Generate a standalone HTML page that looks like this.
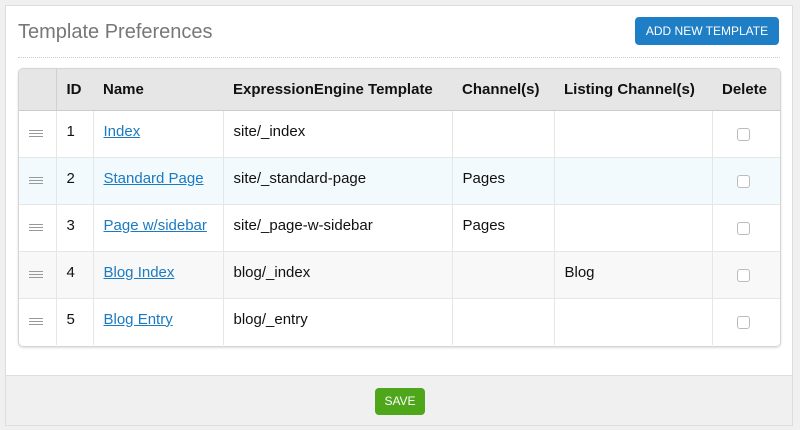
<!DOCTYPE html>
<html><head><style>
body{margin:0;width:800px;height:430px;background:#f0f0f0;font-family:"Liberation Sans",Arial,sans-serif;overflow:hidden}
.panel{position:absolute;left:5px;top:5px;width:788px;height:421px;background:#fff;border:1px solid #ddd;box-sizing:border-box}
h1{position:absolute;left:12px;top:15px;margin:0;font-weight:normal;font-size:20px;color:#777}
.line{position:absolute;left:12px;right:12px;top:51px;border-top:1px dotted #ccc}
.add{position:absolute;left:629px;top:11px;width:144px;height:28px;background:#1f7fc6;border-radius:4px;color:#fff;font-size:12px;text-align:center;line-height:28px}
.tbl{position:absolute;left:12px;top:62px;width:763px;height:279px;border:1px solid #d5d5d5;border-radius:5px;overflow:hidden;box-shadow:0 1px 2px #ddd;box-sizing:border-box}
table{border-collapse:collapse;width:763px;font-size:15px;color:#111;table-layout:fixed}
th{background:#e6e6e6;height:41px;text-align:left;font-weight:bold;padding:0 0 0 10px;border-bottom:1px solid #ccc;box-sizing:border-box}
td{height:47px;border-bottom:1px solid #e6e6e6;border-left:1px solid #e6e6e6;padding:0 0 5px 10px;box-sizing:border-box}
td:first-child{border-left:none;padding-bottom:0}
th.g{border-right:1px solid #d0d0d0}
tr.b td{background:#f3fafd}
tr.c td{background:#f8f8f8}
a{color:#1a7ac2;text-decoration:underline}
.cb{display:inline-block;width:11px;height:11px;border:1px solid #bbb;border-radius:3px;background:#fff;vertical-align:middle}
.foot{position:absolute;left:0;right:0;top:369px;bottom:0;background:#f0f0f0;border-top:1px solid #ddd}
.save{position:absolute;left:369px;top:12px;width:50px;height:27px;background:#4ea71a;border-radius:4px;color:#fff;font-size:12px;text-align:center;line-height:27px}
td.d{text-align:center;padding:0 7px 0 0}
</style></head><body>
<div class="panel">
<h1>Template Preferences</h1>
<div class="add">ADD NEW TEMPLATE</div>
<div class="line"></div>
<div class="tbl"><table>
<colgroup><col style="width:37px"><col style="width:37px"><col style="width:130px"><col style="width:229px"><col style="width:102px"><col style="width:158px"><col></colgroup>
<tr><th class="g"></th><th>ID</th><th>Name</th><th>ExpressionEngine Template</th><th>Channel(s)</th><th>Listing Channel(s)</th><th>Delete</th></tr>
<tr><td><svg width="14" height="9"><path d="M0 1.5H14M0 4.5H14M0 7.5H14" stroke="#999" stroke-width="1"/></svg></td><td>1</td><td><a>Index</a></td><td>site/_index</td><td></td><td></td><td class="d"><span class="cb"></span></td></tr>
<tr class="b"><td><svg width="14" height="9"><path d="M0 1.5H14M0 4.5H14M0 7.5H14" stroke="#999" stroke-width="1"/></svg></td><td>2</td><td><a>Standard Page</a></td><td>site/_standard-page</td><td>Pages</td><td></td><td class="d"><span class="cb"></span></td></tr>
<tr><td><svg width="14" height="9"><path d="M0 1.5H14M0 4.5H14M0 7.5H14" stroke="#999" stroke-width="1"/></svg></td><td>3</td><td><a>Page w/sidebar</a></td><td>site/_page-w-sidebar</td><td>Pages</td><td></td><td class="d"><span class="cb"></span></td></tr>
<tr class="c"><td><svg width="14" height="9"><path d="M0 1.5H14M0 4.5H14M0 7.5H14" stroke="#999" stroke-width="1"/></svg></td><td>4</td><td><a>Blog Index</a></td><td>blog/_index</td><td></td><td>Blog</td><td class="d"><span class="cb"></span></td></tr>
<tr><td style="border-bottom:none"><svg width="14" height="9"><path d="M0 1.5H14M0 4.5H14M0 7.5H14" stroke="#999" stroke-width="1"/></svg></td><td style="border-bottom:none">5</td><td style="border-bottom:none"><a>Blog Entry</a></td><td style="border-bottom:none">blog/_entry</td><td style="border-bottom:none"></td><td style="border-bottom:none"></td><td class="d" style="border-bottom:none"><span class="cb"></span></td></tr>
</table></div>
<div class="foot"><div class="save">SAVE</div></div>
</div>
</body></html>
